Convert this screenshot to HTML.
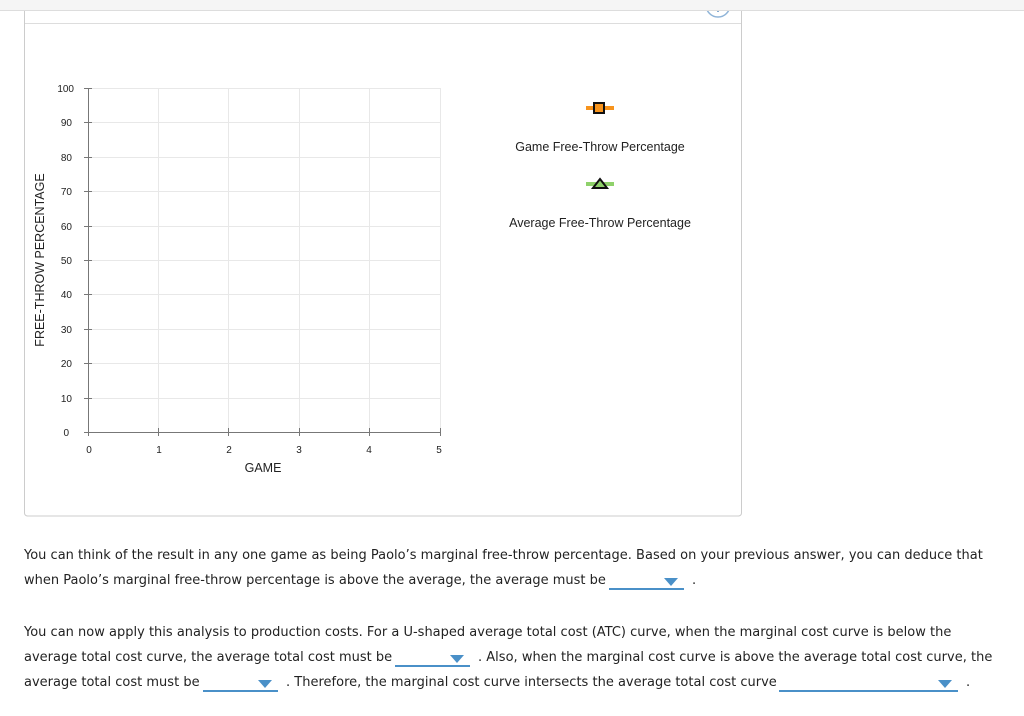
<!DOCTYPE html>
<html><head><style>
body{margin:0;width:1024px;height:716px;background:#fff;position:relative;overflow:hidden;font-family:"DejaVu Sans",Verdana,sans-serif;}
.t{position:absolute;font-size:12.97px;color:#222;white-space:nowrap;letter-spacing:0.02px}
.dd{position:absolute;border-bottom:2px solid #4a90c8;height:14px}
.dd:after{content:"";position:absolute;right:6px;top:4px;border-left:7px solid transparent;border-right:7px solid transparent;border-top:8px solid #4a90c8}
</style></head><body>
<svg width="1024" height="716" style="position:absolute;left:0;top:0">
<rect x="24.5" y="0" width="717" height="516" rx="3" fill="#fff" stroke="#ccc"/>
<circle cx="718" cy="5" r="12" fill="#fff" stroke="#8fb4d8" stroke-width="1.5"/>
<circle cx="718" cy="11" r="1" fill="#5b8fc6"/>
<rect x="0" y="0" width="1024" height="10" fill="#f5f5f5"/>
<line x1="0" y1="10.5" x2="1024" y2="10.5" stroke="#ddd"/>
<line x1="25" y1="23.5" x2="741" y2="23.5" stroke="#ddd"/>
<g stroke="#e8e8e8">
<line x1="158.5" y1="88" x2="158.5" y2="432"/><line x1="228.5" y1="88" x2="228.5" y2="432"/><line x1="299.5" y1="88" x2="299.5" y2="432"/><line x1="369.5" y1="88" x2="369.5" y2="432"/><line x1="440.5" y1="88" x2="440.5" y2="432"/>
<line x1="88" y1="88.5" x2="440" y2="88.5"/><line x1="88" y1="122.5" x2="440" y2="122.5"/><line x1="88" y1="157.5" x2="440" y2="157.5"/><line x1="88" y1="191.5" x2="440" y2="191.5"/><line x1="88" y1="226.5" x2="440" y2="226.5"/><line x1="88" y1="260.5" x2="440" y2="260.5"/><line x1="88" y1="294.5" x2="440" y2="294.5"/><line x1="88" y1="329.5" x2="440" y2="329.5"/><line x1="88" y1="363.5" x2="440" y2="363.5"/><line x1="88" y1="398.5" x2="440" y2="398.5"/>
</g>
<g stroke="#777">
<line x1="88.5" y1="88" x2="88.5" y2="436"/><line x1="84" y1="432.5" x2="440" y2="432.5"/>
<line x1="84" y1="88.5" x2="92" y2="88.5"/><line x1="84" y1="122.5" x2="92" y2="122.5"/><line x1="84" y1="157.5" x2="92" y2="157.5"/><line x1="84" y1="191.5" x2="92" y2="191.5"/><line x1="84" y1="226.5" x2="92" y2="226.5"/><line x1="84" y1="260.5" x2="92" y2="260.5"/><line x1="84" y1="294.5" x2="92" y2="294.5"/><line x1="84" y1="329.5" x2="92" y2="329.5"/><line x1="84" y1="363.5" x2="92" y2="363.5"/><line x1="84" y1="398.5" x2="92" y2="398.5"/>
<line x1="158.5" y1="428" x2="158.5" y2="436"/><line x1="228.5" y1="428" x2="228.5" y2="436"/><line x1="299.5" y1="428" x2="299.5" y2="436"/><line x1="369.5" y1="428" x2="369.5" y2="436"/><line x1="440.5" y1="428" x2="440.5" y2="436"/>
</g>
<g font-family="Liberation Sans,Arial,sans-serif" font-size="10" fill="#222" text-anchor="end">
<text x="74" y="92">100</text><text x="72" y="126">90</text><text x="72" y="161">80</text><text x="72" y="195">70</text><text x="72" y="230">60</text><text x="72" y="264">50</text><text x="72" y="298">40</text><text x="72" y="333">30</text><text x="72" y="367">20</text><text x="72" y="402">10</text><text x="69" y="436">0</text>
</g>
<g font-family="Liberation Sans,Arial,sans-serif" font-size="10" fill="#222" text-anchor="middle">
<text x="89" y="453">0</text><text x="159" y="453">1</text><text x="229" y="453">2</text><text x="299" y="453">3</text><text x="369" y="453">4</text><text x="439" y="453">5</text>
</g>
<text x="263" y="472" font-family="Liberation Sans,Arial,sans-serif" font-size="12.5" text-anchor="middle" fill="#222">GAME</text>
<text transform="translate(44,260) rotate(-90)" font-family="Liberation Sans,Arial,sans-serif" font-size="12.5" text-anchor="middle" fill="#222">FREE-THROW PERCENTAGE</text>
<rect x="586" y="106" width="28" height="4" fill="#f7941d"/>
<rect x="594" y="103" width="10" height="10" fill="#f7941d" stroke="#111" stroke-width="2"/>
<text x="600" y="151" font-family="Liberation Sans,Arial,sans-serif" font-size="12.5" text-anchor="middle" fill="#222">Game Free-Throw Percentage</text>
<rect x="586" y="182" width="28" height="4" fill="#8fd16b"/>
<polygon points="600,179 607,188 593,188" fill="#8fd16b" stroke="#111" stroke-width="2"/>
<text x="600" y="227" font-family="Liberation Sans,Arial,sans-serif" font-size="12.5" text-anchor="middle" fill="#222">Average Free-Throw Percentage</text>
</svg>
<div class="t" style="left:24px;top:548px">You can think of the result in any one game as being Paolo’s marginal free-throw percentage. Based on your previous answer, you can deduce that</div>
<div class="t" style="left:24px;top:573px">when Paolo’s marginal free-throw percentage is above the average, the average must be</div>
<div class="dd" style="left:609px;top:574px;width:75px"></div>
<div class="t" style="left:692px;top:573px">.</div>
<div class="t" style="left:24px;top:625px">You can now apply this analysis to production costs. For a U-shaped average total cost (ATC) curve, when the marginal cost curve is below the</div>
<div class="t" style="left:24px;top:650px">average total cost curve, the average total cost must be</div>
<div class="dd" style="left:395px;top:651px;width:75px"></div>
<div class="t" style="left:478px;top:650px">. Also, when the marginal cost curve is above the average total cost curve, the</div>
<div class="t" style="left:24px;top:675px">average total cost must be</div>
<div class="dd" style="left:203px;top:676px;width:75px"></div>
<div class="t" style="left:286px;top:675px">. Therefore, the marginal cost curve intersects the average total cost curve</div>
<div class="dd" style="left:779px;top:676px;width:179px"></div>
<div class="t" style="left:966px;top:675px">.</div>
</body></html>
